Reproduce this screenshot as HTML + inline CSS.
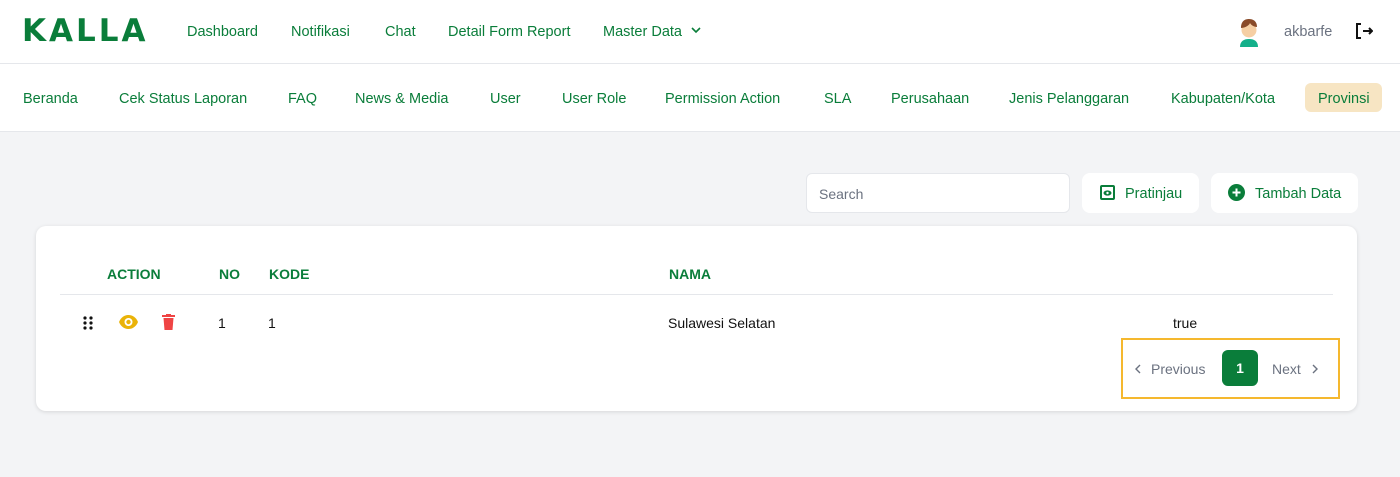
<!DOCTYPE html>
<html><head><meta charset="utf-8"><style>
*{margin:0;padding:0;box-sizing:border-box}
body{width:1400px;height:477px;background:#f3f4f6;font-family:"Liberation Sans",sans-serif;position:relative;overflow:hidden}
.top{position:absolute;left:0;top:0;width:1400px;height:64px;background:#fff;border-bottom:1px solid #e5e7eb}
.sub{position:absolute;left:0;top:64px;width:1400px;height:68px;background:#fff;border-bottom:1px solid #e5e7eb}
.t{position:absolute;font-size:14.5px;color:#0a7d3a;white-space:nowrap}
.logo{position:absolute;left:22px;top:14px;font-size:31px;font-weight:bold;color:#0a7d3a;letter-spacing:3px;font-family:"DejaVu Sans",sans-serif;line-height:34px}
.btn{position:absolute;background:#fff;border-radius:8px;height:40px;top:173px}
.card{position:absolute;left:36px;top:226px;width:1321px;height:185px;background:#fff;border-radius:10px;box-shadow:0 1px 4px rgba(0,0,0,.12)}
.h{position:absolute;font-size:14px;font-weight:bold;color:#0a7d3a}
.d{position:absolute;font-size:14px;color:#111}
</style></head><body>
<div class="top">
<div class="logo">KALLA</div>
<div class="t" style="left:187px;top:24px">Dashboard</div>
<div class="t" style="left:291px;top:24px">Notifikasi</div>
<div class="t" style="left:385px;top:24px">Chat</div>
<div class="t" style="left:448px;top:24px">Detail Form Report</div>
<div class="t" style="left:603px;top:24px">Master Data</div>
<svg style="position:absolute;left:691px;top:26px" width="10" height="8" viewBox="0 0 10 8"><path d="M1 2l4 4 4-4" stroke="#0a7d3a" stroke-width="1.6" fill="none"/></svg>
<svg style="position:absolute;left:1236px;top:17px" width="26" height="30" viewBox="0 0 26 30"><path d="M4 30c0-6 4-8 9-8s9 2 9 8z" fill="#14b08a"/><circle cx="13" cy="13" r="7.5" fill="#f6cfa4"/><path d="M5 11c0-7 4-9 8-9s8 2 8 8c-3 0-6-2-7-4-1 3-6 5-9 5z" fill="#8a4b2a"/></svg>
<div class="t" style="left:1284px;top:24px;color:#6b7280">akbarfe</div>
<svg style="position:absolute;left:1355px;top:23px" width="18" height="16" viewBox="0 0 18 16"><path d="M6 1H2v14h4M8 8h9M14 5l3 3-3 3" stroke="#111" stroke-width="2" fill="none"/></svg>
</div>
<div class="sub">
<div class="t" style="left:23px;top:27px">Beranda</div>
<div class="t" style="left:119px;top:27px">Cek Status Laporan</div>
<div class="t" style="left:288px;top:27px">FAQ</div>
<div class="t" style="left:355px;top:27px">News &amp; Media</div>
<div class="t" style="left:490px;top:27px">User</div>
<div class="t" style="left:562px;top:27px">User Role</div>
<div class="t" style="left:665px;top:27px">Permission Action</div>
<div class="t" style="left:824px;top:27px">SLA</div>
<div class="t" style="left:891px;top:27px">Perusahaan</div>
<div class="t" style="left:1009px;top:27px">Jenis Pelanggaran</div>
<div class="t" style="left:1171px;top:27px">Kabupaten/Kota</div>
<div style="position:absolute;left:1305px;top:19px;width:77px;height:29px;background:#f7e5c3;border-radius:6px"></div>
<div class="t" style="left:1318px;top:27px">Provinsi</div>
</div>
<div style="position:absolute;left:806px;top:173px;width:264px;height:40px;background:#fff;border:1px solid #e5e7eb;border-radius:6px"></div>
<div class="t" style="left:819px;top:186px;color:#6b7280;font-size:14px">Search</div>
<div class="btn" style="left:1082px;width:117px"></div>
<svg style="position:absolute;left:1100px;top:185px" width="15" height="15" viewBox="0 0 15 15"><rect x="1" y="1" width="13" height="13" rx="1" fill="none" stroke="#0a7d3a" stroke-width="2"/><ellipse cx="7.5" cy="8" rx="4" ry="2.6" fill="#0a7d3a"/><circle cx="7.5" cy="8" r="1.2" fill="#fff"/></svg>
<div class="t" style="left:1125px;top:186px">Pratinjau</div>
<div class="btn" style="left:1211px;width:147px"></div>
<svg style="position:absolute;left:1228px;top:184px" width="17" height="17" viewBox="0 0 17 17"><circle cx="8.5" cy="8.5" r="8.5" fill="#0a7d3a"/><path d="M8.5 4.5v8M4.5 8.5h8" stroke="#fff" stroke-width="2"/></svg>
<div class="t" style="left:1255px;top:186px">Tambah Data</div>
<div class="card">
<div class="h" style="left:71px;top:40px">ACTION</div>
<div class="h" style="left:183px;top:40px">NO</div>
<div class="h" style="left:233px;top:40px">KODE</div>
<div class="h" style="left:633px;top:40px">NAMA</div>
<div style="position:absolute;left:24px;top:68px;width:1273px;height:1px;background:#e5e7eb"></div>
<svg style="position:absolute;left:47px;top:90px" width="10" height="14" viewBox="0 0 10 14"><g fill="#111"><circle cx="2" cy="2" r="1.6"/><circle cx="8" cy="2" r="1.6"/><circle cx="2" cy="7" r="1.6"/><circle cx="8" cy="7" r="1.6"/><circle cx="2" cy="12" r="1.6"/><circle cx="8" cy="12" r="1.6"/></g></svg>
<svg style="position:absolute;left:83px;top:89px" width="19" height="14" viewBox="0 0 19 14"><path d="M0 7C2 2 6 0 9.5 0S17 2 19 7C17 12 13 14 9.5 14S2 12 0 7z" fill="#eab308"/><circle cx="9.5" cy="7" r="4" fill="#fff"/><circle cx="9.5" cy="7" r="2.2" fill="#eab308"/></svg>
<svg style="position:absolute;left:126px;top:88px" width="13" height="16" viewBox="0 0 13 16"><rect x="0" y="1" width="13" height="2" fill="#ef4444"/><rect x="4" y="0" width="5" height="2" fill="#ef4444"/><path d="M1.5 4h10l-1 12h-8z" fill="#ef4444"/></svg>
<div class="d" style="left:182px;top:89px">1</div>
<div class="d" style="left:232px;top:89px">1</div>
<div class="d" style="left:632px;top:89px">Sulawesi Selatan</div>
<div class="d" style="left:1137px;top:89px">true</div>
<div style="position:absolute;left:1085px;top:112px;width:219px;height:61px;border:2px solid #f5b82e"></div>
<svg style="position:absolute;left:1099px;top:138px" width="6" height="10" viewBox="0 0 6 10"><path d="M5 1L1 5l4 4" stroke="#6b7280" stroke-width="1.4" fill="none"/></svg>
<div class="d" style="left:1115px;top:135px;color:#6b7280">Previous</div>
<div style="position:absolute;left:1186px;top:124px;width:36px;height:36px;background:#0a7d3a;border-radius:6px;color:#fff;font-size:14px;font-weight:bold;text-align:center;line-height:36px">1</div>
<div class="d" style="left:1236px;top:135px;color:#6b7280">Next</div>
<svg style="position:absolute;left:1276px;top:138px" width="6" height="10" viewBox="0 0 6 10"><path d="M1 1l4 4-4 4" stroke="#6b7280" stroke-width="1.4" fill="none"/></svg>
</div>
</body></html>
